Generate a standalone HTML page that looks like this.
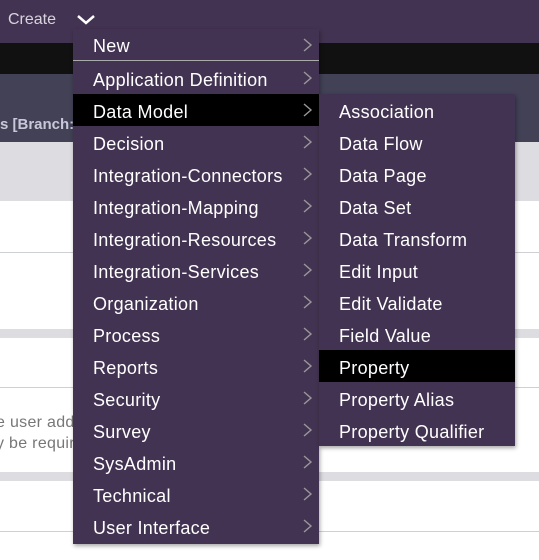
<!DOCTYPE html>
<html><head><style>
*{margin:0;padding:0;box-sizing:border-box}
body{width:539px;height:560px;overflow:hidden;position:relative;background:#fff;font-family:"Liberation Sans","DejaVu Sans",sans-serif}
.abs{position:absolute}
.menu{position:absolute;background:#433352;box-shadow:1px 2px 4px rgba(0,0,0,.35)}
.it{position:relative;height:32px;line-height:32px;padding-top:2px;color:#fff;font-size:18px;letter-spacing:.3px;padding-left:20px;white-space:nowrap}
.it.sel{background:#000}
.it svg{position:absolute;right:6px;top:9px}
</style></head><body>
<div class="abs" style="left:0;top:0;width:539px;height:43px;background:#433352"></div>
<div class="abs" style="left:8px;top:11px;color:#d8d4de;font-size:16px">Create</div>
<svg class="abs" style="left:76px;top:14px" width="20" height="12"><path d="M2 2 L10 9 L18 2" stroke="#fff" stroke-width="2.5" fill="none"/></svg>
<div class="abs" style="left:0;top:43px;width:539px;height:31px;background:#111"></div>
<div class="abs" style="left:0;top:74px;width:539px;height:68px;background:#424156"></div>
<div class="abs" style="left:0;top:116px;color:#c8c8da;font-size:15px;font-weight:bold">s [Branch:</div>
<div class="abs" style="left:0;top:142px;width:539px;height:59px;background:#dcdce1"></div>
<div class="abs" style="left:0;top:252px;width:539px;height:1px;background:#cfcfd6"></div>
<div class="abs" style="left:0;top:329px;width:539px;height:9px;background:#dcdce1"></div>
<div class="abs" style="left:0;top:387px;width:539px;height:1px;background:#cfcfd6"></div>
<div class="abs" style="left:-4px;top:412px;color:#777;font-size:16px;letter-spacing:.3px;line-height:21px">e user adds<br>y be requir</div>
<div class="abs" style="left:0;top:472px;width:539px;height:9px;background:#dcdce1"></div>
<div class="abs" style="left:0;top:531px;width:539px;height:1px;background:#cfcfd6"></div>

<div class="menu" style="left:73px;top:29px;width:246px;height:515px">
<div class="it" style="height:31px;line-height:31px">New<svg width="10" height="14"><path d="M1 1L8 7L1 13" stroke="#999" stroke-width="1.4" fill="none"/></svg></div>
<div style="height:1px;background:#aaa;margin-bottom:1px"></div>
<div class="it">Application Definition<svg width="10" height="14"><path d="M1 1L8 7L1 13" stroke="#999" stroke-width="1.4" fill="none"/></svg></div>
<div class="it sel">Data Model<svg width="10" height="14"><path d="M1 1L8 7L1 13" stroke="#999" stroke-width="1.4" fill="none"/></svg></div>
<div class="it">Decision<svg width="10" height="14"><path d="M1 1L8 7L1 13" stroke="#999" stroke-width="1.4" fill="none"/></svg></div>
<div class="it">Integration-Connectors<svg width="10" height="14"><path d="M1 1L8 7L1 13" stroke="#999" stroke-width="1.4" fill="none"/></svg></div>
<div class="it">Integration-Mapping<svg width="10" height="14"><path d="M1 1L8 7L1 13" stroke="#999" stroke-width="1.4" fill="none"/></svg></div>
<div class="it">Integration-Resources<svg width="10" height="14"><path d="M1 1L8 7L1 13" stroke="#999" stroke-width="1.4" fill="none"/></svg></div>
<div class="it">Integration-Services<svg width="10" height="14"><path d="M1 1L8 7L1 13" stroke="#999" stroke-width="1.4" fill="none"/></svg></div>
<div class="it">Organization<svg width="10" height="14"><path d="M1 1L8 7L1 13" stroke="#999" stroke-width="1.4" fill="none"/></svg></div>
<div class="it">Process<svg width="10" height="14"><path d="M1 1L8 7L1 13" stroke="#999" stroke-width="1.4" fill="none"/></svg></div>
<div class="it">Reports<svg width="10" height="14"><path d="M1 1L8 7L1 13" stroke="#999" stroke-width="1.4" fill="none"/></svg></div>
<div class="it">Security<svg width="10" height="14"><path d="M1 1L8 7L1 13" stroke="#999" stroke-width="1.4" fill="none"/></svg></div>
<div class="it">Survey<svg width="10" height="14"><path d="M1 1L8 7L1 13" stroke="#999" stroke-width="1.4" fill="none"/></svg></div>
<div class="it">SysAdmin<svg width="10" height="14"><path d="M1 1L8 7L1 13" stroke="#999" stroke-width="1.4" fill="none"/></svg></div>
<div class="it">Technical<svg width="10" height="14"><path d="M1 1L8 7L1 13" stroke="#999" stroke-width="1.4" fill="none"/></svg></div>
<div class="it">User Interface<svg width="10" height="14"><path d="M1 1L8 7L1 13" stroke="#999" stroke-width="1.4" fill="none"/></svg></div>
</div>

<div class="menu" style="left:319px;top:94px;width:196px;height:352px">
<div class="it">Association</div>
<div class="it">Data Flow</div>
<div class="it">Data Page</div>
<div class="it">Data Set</div>
<div class="it">Data Transform</div>
<div class="it">Edit Input</div>
<div class="it">Edit Validate</div>
<div class="it">Field Value</div>
<div class="it sel">Property</div>
<div class="it">Property Alias</div>
<div class="it">Property Qualifier</div>
</div>
</body></html>
